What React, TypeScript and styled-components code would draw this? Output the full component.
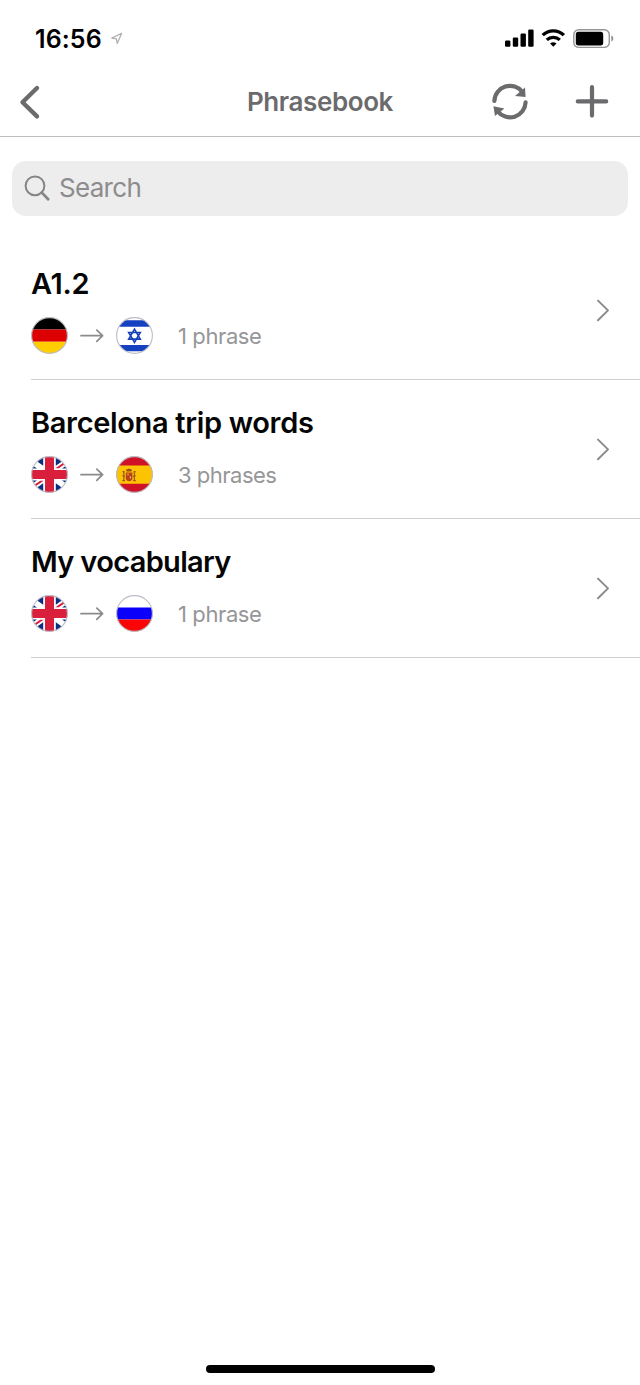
import React from "react";
import styled, { createGlobalStyle } from "styled-components";

const GlobalStyle = createGlobalStyle`
  * { box-sizing: border-box; }
  body { margin: 0; background: #fff; }
  svg { display: block; flex: none; overflow: visible; }
`;

const Screen = styled.div`
  display: flex;
  flex-direction: column;
  width: 640px;
  height: 1385px;
  background: #fff;
  font-family: Inter, "Liberation Sans", sans-serif;
  overflow: hidden;
`;

const StatusBar = styled.div`
  display: flex;
  justify-content: space-between;
  height: 66px;
  padding: 22px 26px 0 35px;
`;

const StatusGroup = styled.div<{ $gap: number }>`
  display: flex;
  align-items: center;
  gap: ${(p) => p.$gap}px;
  height: 32px;
`;

const Clock = styled.span`
  padding-top: 2px;
  font-size: 25px;
  font-weight: 600;
  line-height: 32px;
  letter-spacing: 0.1px;
  color: #000;
`;

const NavBar = styled.header`
  display: grid;
  grid-template-columns: 1fr auto 1fr;
  align-items: center;
  height: 71px;
  padding: 1px 32px 0 20px;
  border-bottom: 1px solid #bdbdbf;
`;

const NavTitle = styled.h1`
  margin: 0 -6px 0 6px;
  padding-top: 1px;
  font-size: 26px;
  font-weight: 600;
  line-height: 34px;
  letter-spacing: -0.4px;
  color: #6b6b6e;
`;

const NavActions = styled.div`
  display: flex;
  align-items: center;
  justify-content: flex-end;
  gap: 48px;
`;

const SearchField = styled.div`
  display: flex;
  align-items: center;
  gap: 9px;
  height: 55px;
  margin: 24px 12px;
  padding: 0 12px 2px;
  border-radius: 14px;
  background: #ededed;
`;

const Placeholder = styled.span`
  font-size: 26px;
  line-height: 34px;
  letter-spacing: -0.7px;
  color: #8c8c8e;
`;

const List = styled.ul`
  flex: 1;
  margin: 0;
  padding: 1px 0 0 31px;
  list-style: none;
`;

const Row = styled.li`
  display: flex;
  align-items: center;
  justify-content: space-between;
  height: 139px;
  padding-right: 30px;
  border-bottom: 1px solid #d0d0d1;
`;

const RowBody = styled.div`
  display: flex;
  flex-direction: column;
  gap: 15px;
`;

const RowTitle = styled.h2<{ $tracking: number }>`
  margin: 0;
  font-size: 29px;
  font-weight: 600;
  line-height: 36px;
  letter-spacing: ${(p) => p.$tracking}px;
  white-space: nowrap;
  color: #050505;
`;

const Languages = styled.div`
  display: flex;
  align-items: center;
  gap: 12px;
`;

const Count = styled.span<{ $tracking: number }>`
  margin-left: 13px;
  font-size: 22px;
  line-height: 30px;
  letter-spacing: ${(p) => p.$tracking}px;
  color: #969698;
`;

const HomeArea = styled.footer`
  display: flex;
  justify-content: center;
  height: 20px;
`;

const HomeIndicator = styled.div`
  width: 229px;
  height: 8px;
  border-radius: 4px;
  background: #000;
`;

const LocationIcon = () => (
  <svg width="12" height="12" viewBox="0 0 12 12">
    <path d="M10.6 1.4.8 6l4.6.8.8 4.6z" fill="none" stroke="#b0b0b0" strokeWidth="1.3" strokeLinejoin="round" />
  </svg>
);

const SignalIcon = () => (
  <svg width="30" height="18" viewBox="0 0 30 18">
    <rect x="0" y="11.5" width="5.4" height="6.3" rx="1.2" />
    <rect x="7.8" y="8.5" width="5.4" height="9.3" rx="1.2" />
    <rect x="15.5" y="4.5" width="5.4" height="13.3" rx="1.2" />
    <rect x="23.2" y="0.5" width="5.4" height="17.3" rx="1.2" />
  </svg>
);

const WifiIcon = () => (
  <svg width="24" height="18" viewBox="0 0 24 18">
    <g transform="translate(-0.7 0)">
      <path d="M1.4 6.1a15.3 15.3 0 0 1 21.2 0M5.5 10.9a9.4 9.4 0 0 1 13 0" fill="none" stroke="#000" strokeWidth="3.3" />
      <path d="M8.8 14.6a4.8 4.8 0 0 1 6.4 0L12 17.8z" />
    </g>
  </svg>
);

const BatteryIcon = () => (
  <svg width="41" height="19" viewBox="0 0 41 19">
    <rect x="0.8" y="0.8" width="35.5" height="17.6" rx="5" fill="none" stroke="#959595" strokeWidth="1.4" />
    <rect x="2.8" y="2.8" width="27.4" height="13.6" rx="2.6" />
    <path d="M38.4 6.6c2.5.8 2.5 5.2 0 6z" fill="#8a8a8a" />
  </svg>
);

const BackIcon = () => (
  <svg width="20" height="34" viewBox="0 0 20 34">
    <path d="M17 3 2.5 17.2 17 31.4" fill="none" stroke="#6b6b6e" strokeWidth="4.4" strokeLinecap="round" strokeLinejoin="round" />
  </svg>
);

const SyncIcon = () => (
  <svg width="36" height="36" viewBox="0 0 36 36">
    <g fill="none" stroke="#6b6b6e" strokeWidth="4.2">
      <path d="M2.4 16.8A15.6 15.6 0 0 1 30.4 8" strokeLinecap="round" />
      <path d="M33.6 18.4A15.6 15.6 0 0 1 5.6 27.2" strokeLinecap="round" />
    </g>
    <path d="M33 3.4 33.6 13 23 12zM3 32 1.4 22.2 12.4 24.4z" fill="#6b6b6e" />
  </svg>
);

const PlusIcon = () => (
  <svg width="32" height="32" viewBox="0 0 32 32">
    <path d="M16 1.2v28.4M1.8 15.4h28.4" fill="none" stroke="#6b6b6e" strokeWidth="4.2" strokeLinecap="round" />
  </svg>
);

const SearchIcon = () => (
  <svg width="26" height="26" viewBox="0 0 26 26">
    <circle cx="11" cy="10.8" r="9.4" fill="none" stroke="#858587" strokeWidth="2" />
    <path d="m17.8 17.6 6.4 6.6" stroke="#858587" strokeWidth="2.8" strokeLinecap="round" />
  </svg>
);

const ArrowIcon = () => (
  <svg width="24" height="14" viewBox="0 0 24 14">
    <path d="M1 6.7h21.6M16.8 1.1l5.8 5.6-5.8 5.6" fill="none" stroke="#8b8b8d" strokeWidth="1.7" strokeLinecap="round" strokeLinejoin="round" />
  </svg>
);

const ChevronIcon = () => (
  <svg width="14" height="24" viewBox="0 0 14 24">
    <path d="M2 2.6 12 12.4 2 22.2" fill="none" stroke="#8b8b8d" strokeWidth="2" strokeLinecap="round" strokeLinejoin="round" />
  </svg>
);

type Country = "de" | "il" | "gb" | "es" | "ru";

const flags: Record<Country, React.ReactNode> = {
  de: (
    <>
      <path d="M0 0h37v12.6H0z" fill="#000" />
      <path d="M0 12.6h37v12.2H0z" fill="#dd0000" />
      <path d="M0 24.8h37V37H0z" fill="#ffce00" />
    </>
  ),
  il: (
    <>
      <path d="M0 0h37v37H0z" fill="#fff" />
      <path d="M0 3.2h37v6.6H0zM0 28h37v6.2H0z" fill="#1540c0" />
      <path d="m18.5 12.2 5.8 9.9H12.7zM18.5 25.4l5.8-9.9H12.7z" fill="none" stroke="#1540b8" strokeWidth="1.6" />
    </>
  ),
  gb: (
    <>
      <path d="M0 0h37v37H0z" fill="#fff" />
      <path d="M4.8 4.5 8 0h4.2v9.8zM32.2 4.5 29 0h-4.2v9.8zM4.8 32.5 8 37h4.2v-9.8zM32.2 32.5 29 37h-4.2v-9.8z" fill="#0b2f80" />
      <path d="M0 8.6 6 12.4H0zM37 8.6l-6 3.8h6zM0 28.4l6-3.8H0zM37 28.4l-6-3.8h6z" fill="#0b2f80" />
      <path d="m2.6 29.2 6.6-4.5h3.4l-9 6.4zM34.4 7.8l-6.6 4.5h-3.4l9-6.4z" fill="#d91f3c" />
      <path d="M14 0h9v14h14v9H23v14h-9V23H0v-9h14z" fill="#d91f3c" />
    </>
  ),
  es: (
    <>
      <path d="M0 0h37v37H0z" fill="#cf1225" />
      <path d="M0 9.4h37v18.4H0z" fill="#fcc400" />
      <path d="M9.8 16.4h6.6v6.2c0 3.4-6.6 3.4-6.6 0z" fill="#b84318" />
      <path d="M10 14.2c1.2-2 4.8-2 6 0l-.6 1.4h-4.8z" fill="#a54a1c" />
      <path d="M11.4 17.4h1.2v1.8h-1.2zM13.8 20.2H15v2.2h-1.2z" fill="#f2b06a" />
      <path d="M7.8 16v8.4M18.4 16v8.4" stroke="#a0662c" strokeWidth="1.4" />
      <path d="M6.4 24.6H9M17.2 24.6h2.6M6.4 19.4l2.4 1M17 20.4l2.6-1M6.6 15.6h2M17.6 15.6h2" stroke="#a0501c" strokeWidth="1.1" />
    </>
  ),
  ru: (
    <>
      <path d="M0 0h37v12.4H0z" fill="#fff" />
      <path d="M0 12.4h37v12.2H0z" fill="#0b00fa" />
      <path d="M0 24.6h37V37H0z" fill="#fa0505" />
    </>
  ),
};

const Flag = ({ country, id }: { country: Country; id: string }) => (
  <svg width="37" height="37" viewBox="0 0 37 37">
    <clipPath id={id}>
      <circle cx="18.5" cy="18.5" r="18" />
    </clipPath>
    <g clipPath={`url(#${id})`}>{flags[country]}</g>
    <circle cx="18.5" cy="18.5" r="17.9" fill="none" stroke="#bcbcc4" strokeWidth="1.1" />
  </svg>
);

interface Phrasebook {
  name: string;
  from: Country;
  to: Country;
  count: string;
  tracking: number;
  countTracking: number;
}

const phrasebooks: Phrasebook[] = [
  { name: "A1.2", from: "de", to: "il", count: "1 phrase", tracking: -0.3, countTracking: -0.4 },
  { name: "Barcelona trip words", from: "gb", to: "es", count: "3 phrases", tracking: -0.33, countTracking: -0.5 },
  { name: "My vocabulary", from: "gb", to: "ru", count: "1 phrase", tracking: -0.67, countTracking: -0.4 },
];

export default function App() {
  return (
    <>
      <GlobalStyle />
      <Screen>
        <StatusBar>
          <StatusGroup $gap={9}>
            <Clock>16:56</Clock>
            <LocationIcon />
          </StatusGroup>
          <StatusGroup $gap={7}>
            <SignalIcon />
            <WifiIcon />
            <BatteryIcon />
          </StatusGroup>
        </StatusBar>
        <NavBar>
          <BackIcon />
          <NavTitle>Phrasebook</NavTitle>
          <NavActions>
            <SyncIcon />
            <PlusIcon />
          </NavActions>
        </NavBar>
        <SearchField>
          <SearchIcon />
          <Placeholder>Search</Placeholder>
        </SearchField>
        <List>
          {phrasebooks.map((book, i) => (
            <Row key={book.name}>
              <RowBody>
                <RowTitle $tracking={book.tracking}>{book.name}</RowTitle>
                <Languages>
                  <Flag country={book.from} id={`from-${i}`} />
                  <ArrowIcon />
                  <Flag country={book.to} id={`to-${i}`} />
                  <Count $tracking={book.countTracking}>{book.count}</Count>
                </Languages>
              </RowBody>
              <ChevronIcon />
            </Row>
          ))}
        </List>
        <HomeArea>
          <HomeIndicator />
        </HomeArea>
      </Screen>
    </>
  );
}
